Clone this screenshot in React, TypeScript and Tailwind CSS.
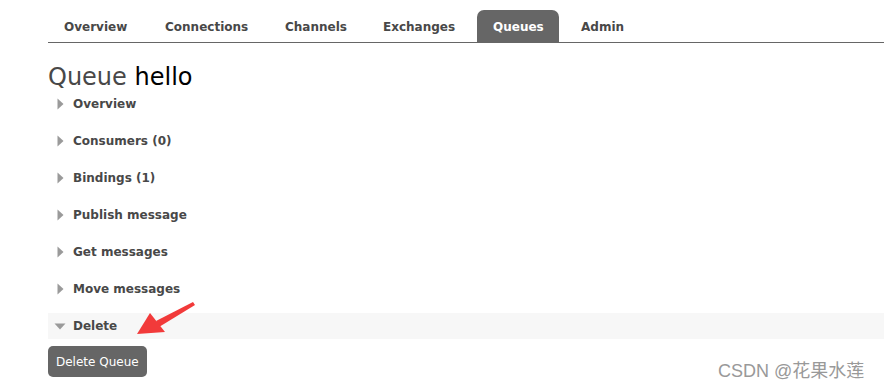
import React from "react";

const tabs = [
  { label: "Overview", w: "w-[95px]" },
  { label: "Connections", w: "w-[114px]" },
  { label: "Channels", w: "w-[92px]" },
  { label: "Exchanges", w: "w-[104px]" },
  { label: "Queues", w: "w-[82px]", active: true },
  { label: "Admin", w: "w-[90px]" },
];

const sections = [
  "Overview",
  "Consumers (0)",
  "Bindings (1)",
  "Publish message",
  "Get messages",
  "Move messages",
];

function RightTri() {
  return (
    <svg width="7" height="12" viewBox="0 0 7 12" className="shrink-0">
      <path d="M0.5 0.5 L6.5 6 L0.5 11.5 Z" fill="#9a9a9a" />
    </svg>
  );
}

function DownTri() {
  return (
    <svg width="12" height="7" viewBox="0 0 12 7" className="shrink-0">
      <path d="M0.5 0.5 L11.5 0.5 L6 6.5 Z" fill="#9a9a9a" />
    </svg>
  );
}

export default function App() {
  return (
    <div
      className="relative w-[884px] h-[390px] overflow-hidden bg-white pl-[48px] pt-[10px] text-[#484848]"
      style={{ fontFamily: '"DejaVu Sans", Verdana, sans-serif' }}
    >
      {/* tab bar */}
      <div className="flex gap-[6px] border-b border-[#666] h-[33px]">
        {tabs.map((t) => (
          <div
            key={t.label}
            className={`${t.w} h-[32px] pl-4 pt-[2px] flex items-center text-[12px] font-bold rounded-t-[7px] ${
              t.active ? "bg-[#666] text-white" : "text-[#484848]"
            }`}
          >
            {t.label}
          </div>
        ))}
      </div>

      <h1 className="mt-[20px] text-[24px] leading-[28px] font-normal">
        <span className="text-[#484848]">Queue </span>
        <span className="text-black">hello</span>
      </h1>

      <div className="flex flex-col gap-[11px]">
        {sections.map((s) => (
          <div key={s} className="h-[26px] flex items-center gap-[9px] pl-[9px]">
            <RightTri />
            <span className="text-[12px] font-bold">{s}</span>
          </div>
        ))}
        <div className="h-[26px] flex items-center gap-[7px] pl-[6px] bg-[#f7f7f7]">
          <DownTri />
          <span className="text-[12px] font-bold">Delete</span>
        </div>
      </div>

      <button className="mt-[7px] h-[31px] px-[8px] rounded-[5px] bg-[#666] text-white text-[12px]">
        Delete Queue
      </button>

      {/* red annotation arrow */}
      <svg
        className="absolute left-0 top-0 pointer-events-none"
        width="884"
        height="390"
        viewBox="0 0 884 390"
      >
        <path d="M193 302 L156 321 L159 327 L195 305 Z" fill="#f23a3a" />
        <path d="M137 334 L150 313 L165 332 Z" fill="#f23a3a" />
      </svg>

      <div
        className="absolute left-[718px] top-[358px] text-[18px] text-[#999]"
        style={{ fontFamily: '"Liberation Sans", "Noto Sans CJK SC", sans-serif' }}
      >
        CSDN @花果水莲
      </div>
    </div>
  );
}
